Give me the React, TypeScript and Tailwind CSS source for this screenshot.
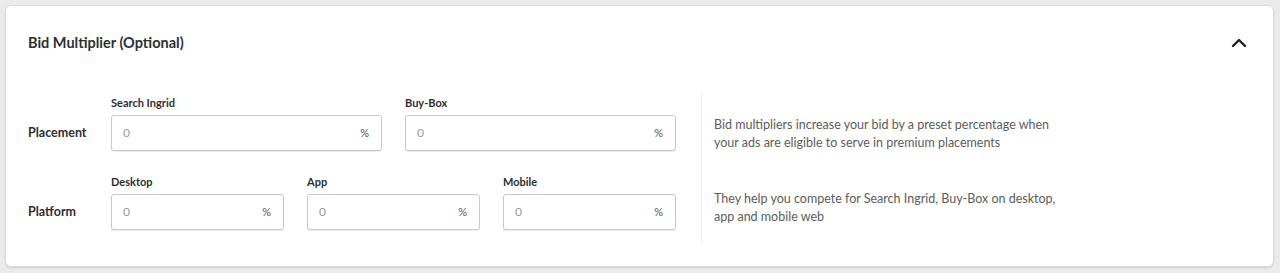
import { ChevronUp } from "lucide-react";

const font = { fontFamily: "Lato, 'Open Sans', sans-serif" };

function Field({ label }: { label: string }) {
  return (
    <div className="flex flex-col">
      <span className="text-[11px] leading-[12px] font-bold text-[#2e2f32] mb-[6px]">
        {label}
      </span>
      <div className="h-[36px] flex items-center justify-between pl-[11px] pr-[12px] border border-[#c9c9c9] rounded-[3px] bg-white shadow-[0_1px_1px_rgba(0,0,0,0.08)]">
        <span className="text-[12px] text-[#9a9a9a]">0</span>
        <span className="text-[11px] text-[#555]">%</span>
      </div>
    </div>
  );
}

export default function App() {
  return (
    <div style={font} className="w-[1280px] h-[273px] bg-[#ebebeb] pt-[5px] pl-[5px] pr-[6px] pb-[6px]">
      <div className="h-full bg-white border border-[#dcdcdc] rounded-[6px] shadow-[0_1px_2px_rgba(0,0,0,0.12)]">
        <div className="flex items-center justify-between pl-[22px] pr-[22px] pt-[25px] pb-[26px]">
          <h2 className="text-[14.5px] leading-[18px] font-bold text-[#2e2f32]">
            Bid Multiplier (Optional)
          </h2>
          <ChevronUp className="w-[24px] h-[24px] text-[#1f1f1f]" strokeWidth={2.4} />
        </div>
        <div className="flex pl-[22px] pt-[16px]">
          <div className="flex flex-col gap-[25px] w-[648px]">
            <div className="flex items-end">
              <div className="w-[83px] h-[36px] flex items-center text-[12.5px] font-bold text-[#2e2f32]">
                Placement
              </div>
              <div className="grid grid-cols-2 gap-[23px] w-[565px]">
                <Field label="Search Ingrid" />
                <Field label="Buy-Box" />
              </div>
            </div>
            <div className="flex items-end">
              <div className="w-[83px] h-[36px] flex items-center text-[12.5px] font-bold text-[#2e2f32]">
                Platform
              </div>
              <div className="grid grid-cols-3 gap-[23px] w-[565px]">
                <Field label="Desktop" />
                <Field label="App" />
                <Field label="Mobile" />
              </div>
            </div>
          </div>
          <div className="ml-[25px] -mt-[5px] h-[152px] border-l border-[#f0f0f0] pl-[12px] pt-[24px] text-[12.5px] leading-[18px] text-[#5c5c5c] w-[400px]">
            <p>
              Bid multipliers increase your bid by a preset percentage when
              <br />
              your ads are eligible to serve in premium placements
            </p>
            <p className="mt-[38px]">
              They help you compete for Search Ingrid, Buy-Box on desktop,
              <br />
              app and mobile web
            </p>
          </div>
        </div>
      </div>
    </div>
  );
}
